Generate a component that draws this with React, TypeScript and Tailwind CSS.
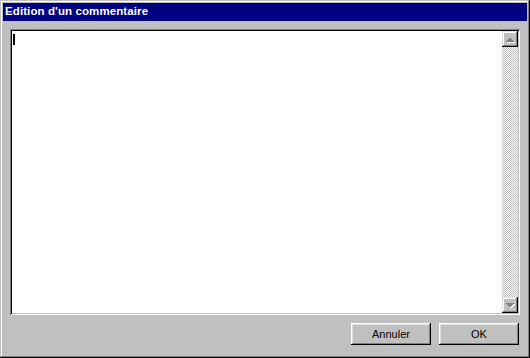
import React from "react";

function ArrowUp() {
  return (
    <svg width="16" height="16" viewBox="0 0 16 16" shapeRendering="crispEdges">
      <polygon points="8,11 4,11 4,10 5,10 5,9 6,9 6,8 7,8 7,7 9,7 9,8 10,8 10,9 11,9 11,10 12,10 12,11" fill="#ffffff" transform="translate(1,1)" />
      <polygon points="8,11 4,11 4,10 5,10 5,9 6,9 6,8 7,8 7,7 9,7 9,8 10,8 10,9 11,9 11,10 12,10 12,11" fill="#808080" />
    </svg>
  );
}

function ArrowDown() {
  return (
    <svg width="16" height="16" viewBox="0 0 16 16" shapeRendering="crispEdges">
      <polygon points="4,6 12,6 12,7 11,7 11,8 10,8 10,9 9,9 9,10 7,10 7,9 6,9 6,8 5,8 5,7 4,7" fill="#ffffff" transform="translate(1,1)" />
      <polygon points="4,6 12,6 12,7 11,7 11,8 10,8 10,9 9,9 9,10 7,10 7,9 6,9 6,8 5,8 5,7 4,7" fill="#808080" />
    </svg>
  );
}

const raised =
  "shadow-[inset_-1px_-1px_#000000,inset_1px_1px_#dfdfdf,inset_-2px_-2px_#808080,inset_2px_2px_#ffffff]";

export default function App() {
  return (
    <div
      className="w-[530px] h-[358px] bg-[#c0c0c0] p-[3px] flex flex-col shadow-[inset_-1px_-1px_#000000,inset_1px_1px_#c0c0c0,inset_-2px_-2px_#808080,inset_2px_2px_#ffffff]"
      style={{ fontFamily: '"Liberation Sans", Arial, sans-serif' }}
    >
      <div className="h-[18px] bg-[#000080] flex items-center pl-[2px]">
        <span className="text-white font-bold text-[11.5px] leading-none tracking-[0.1px]">
          Edition d'un commentaire
        </span>
      </div>
      <div className="ml-[7px] mt-[8px] w-[510px] h-[286px] flex shadow-[inset_1px_1px_#808080,inset_-1px_-1px_#ffffff,inset_2px_2px_#000000,inset_-2px_-2px_#c0c0c0] p-[2px]">
        <div className="flex-1 bg-white relative">
          <div className="absolute left-[1px] top-[3px] w-[2px] h-[11px] bg-black" />
        </div>
        <div className="w-[16px] flex flex-col">
          <div className={`h-[16px] bg-[#c0c0c0] flex items-center justify-center ${raised}`}>
            <ArrowUp />
          </div>
          <div className="flex-1 [background-image:repeating-conic-gradient(#c0c0c0_0%_25%,#ffffff_0%_50%)] [background-size:2px_2px]" />
          <div className={`h-[16px] bg-[#c0c0c0] flex items-center justify-center ${raised}`}>
            <ArrowDown />
          </div>
        </div>
      </div>
      <div className="flex justify-end gap-[8px] mt-[8px] pr-[8px]">
        <button
          className="w-[80px] h-[22px] bg-[#c0c0c0] text-black text-[11px] leading-none shadow-[inset_-1px_-1px_#000000,inset_1px_1px_#ffffff,inset_-2px_-2px_#808080,inset_2px_2px_#dfdfdf]"
        >
          Annuler
        </button>
        <button
          className="w-[80px] h-[22px] bg-[#c0c0c0] text-black text-[11px] leading-none shadow-[inset_-1px_-1px_#000000,inset_1px_1px_#ffffff,inset_-2px_-2px_#808080,inset_2px_2px_#dfdfdf]"
        >
          OK
        </button>
      </div>
    </div>
  );
}
